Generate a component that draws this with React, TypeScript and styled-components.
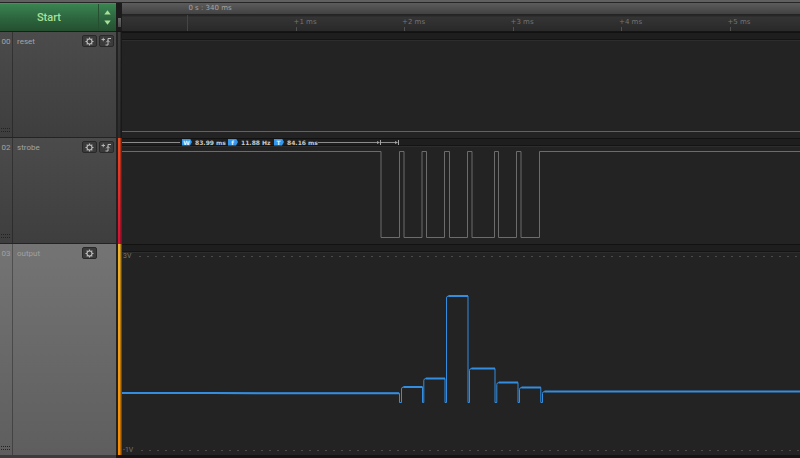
import React from "react";
import styled, { createGlobalStyle } from "styled-components";

const GlobalStyle = createGlobalStyle`
  *, *::before, *::after { box-sizing: border-box; }
  html, body { margin: 0; background: #232323; }
  body { font-family: Roboto, "Liberation Sans", sans-serif; }
  button { font: inherit; border: 0; margin: 0; padding: 0; cursor: pointer; }
  svg { display: block; }
`;

const Page = styled.main`
  display: grid;
  grid-template-rows: 3px 29px 106px 106px minmax(211px, 1fr) 3px;
  min-height: 100vh;
  overflow: hidden;
`;

const TopEdge = styled.div`
  background: #606060;
  border-bottom: 1px solid #262626;
`;

const BottomEdge = styled.div`
  display: grid;
  grid-template-columns: 116px 1fr;
  background: #151414;
  &::before {
    content: "";
    background: #3c3c3c;
  }
`;

const Row = styled.section`
  display: grid;
  grid-template-columns: 116px 6px minmax(0, 1fr);
  min-height: 0;
`;

const StartGroup = styled.div`
  display: grid;
  grid-template-columns: 1fr 17px;
  background: linear-gradient(#3a8450, #2c643e 55%, #25502f);
  border-top: 1px solid #4b8f5f;
  border-bottom: 1px solid #1c1c1c;
`;

const StartButton = styled.button`
  background: none;
  border-right: 1px solid #24502f;
  color: #a8e09a;
  font-size: 11px;
  line-height: 12px;
  font-weight: 500;
`;

const Stepper = styled.div`
  display: grid;
  grid-template-rows: 1fr 1fr;
  padding: 4px 0;
`;

const StepButton = styled.button`
  display: grid;
  place-items: center;
  background: none;
`;

const Gutter = styled.div`
  display: flex;
  align-items: flex-end;
  background: #1c1c1c;
  padding: 0 1px 4px 2px;
  border-bottom: 1px solid #151515;
`;

const ScrollThumb = styled.div`
  flex: 1;
  height: 9px;
  background: linear-gradient(#696969, #4c4c4c);
`;

const TimeRuler = styled.div`
  display: grid;
  grid-template-rows: 12px 1fr;
`;

const BaseTime = styled.div`
  padding-left: 9.8%;
  background: linear-gradient(#5c5c5c, #424242);
  border-bottom: 1px solid #242424;
  color: #a6a6a6;
  font: 7px/11px "DejaVu Sans", sans-serif;
  white-space: pre;
`;

const Ticks = styled.div`
  display: flex;
  min-width: 0;
  overflow: hidden;
  padding-left: 9.6%;
  background: linear-gradient(#242424, #343434 15%, #292929);
  border-bottom: 1px solid #151515;
`;

const Tick = styled.div<{ $major?: boolean }>`
  flex: 0 0 17.7%;
  display: flex;
  flex-direction: column;
  justify-content: space-between;
  color: #747474;
  font: 7px/10px "DejaVu Sans", sans-serif;
  border-left: 1px solid ${(p) => (p.$major ? "#454545" : "transparent")};
  padding-top: 2px;
  &::after {
    content: "";
    width: 1px;
    height: ${(p) => (p.$major ? 0 : 4)}px;
    margin-left: -1px;
    background: #505050;
  }
`;

const TickLabel = styled.span`
  margin-left: -3px;
  white-space: pre;
`;

const Channel = styled.div<{ $selected?: boolean }>`
  display: grid;
  grid-template-columns: 13px 1fr;
  background: ${(p) =>
    p.$selected
      ? "linear-gradient(#747474, #5e5e5e)"
      : "linear-gradient(#4b4b4b, #3e3e3e)"};
  color: ${(p) => (p.$selected ? "#a0a0a0" : "#a4a4a4")};
  border-bottom: ${(p) => (p.$selected ? 0 : 1)}px solid #242424;
  font-size: 8px;
  line-height: 12px;
`;

const ChannelIndex = styled.div`
  display: flex;
  flex-direction: column;
  justify-content: space-between;
  align-items: center;
  padding: 4px 0;
  border-right: 1px solid rgba(0, 0, 0, 0.3);
`;

const ChannelHeader = styled.div`
  display: grid;
  grid-template-columns: 1fr 15px 15px;
  column-gap: 2px;
  align-items: start;
  padding: 3px 2px 0 4px;
`;

const ChannelName = styled.span`
  padding-top: 1px;
`;

const IconButton = styled.button`
  height: 12px;
  display: grid;
  place-items: center;
  color: #bdbdbd;
  background: #3b3b3b;
  border: 1px solid #292929;
  border-radius: 2px;
`;

const ColorBar = styled.div<{ $from: string; $to: string; $edge: string }>`
  border-left: 2px solid #222222;
  border-right: 1px solid ${(p) => p.$edge};
  background: linear-gradient(${(p) => p.$from}, ${(p) => p.$to});
  box-shadow: inset -1px 0 0 rgba(0, 0, 0, 0.25);
`;

const Track = styled.div`
  display: flex;
  flex-direction: column;
  min-width: 0;
  background: #232323;
  & > svg {
    flex: 1;
    min-height: 0;
    width: 100%;
  }
`;

const Band = styled.div`
  height: 8px;
  flex: none;
  display: flex;
  align-items: center;
  background: #1e1e1e;
  border-top: 1px solid #121212;
  border-bottom: 1px solid #141414;
  box-shadow: 0 1px 0 #2d2d2d;
`;

const Span = styled.i<{ $size: string }>`
  flex: 0 0 ${(p) => p.$size};
  height: 1px;
  background: #8c8c8c;
`;

const Badge = styled.b`
  flex: none;
  width: 10px;
  height: 7px;
  margin-left: 2px;
  padding-right: 1px;
  display: flex;
  justify-content: center;
  background: #3296ea;
  clip-path: polygon(0 0, 80% 0, 100% 50%, 80% 100%, 0 100%);
  color: #e4f2ff;
  font: bold 6px/7px "DejaVu Sans", sans-serif;
`;

const Reading = styled.span`
  flex: none;
  width: 34px;
  padding-left: 3px;
  padding-top: 1px;
  color: #c8c8c8;
  font: bold 6px/8px "DejaVu Sans", sans-serif;
  white-space: pre;
`;

const AxisLine = styled.div`
  height: 9px;
  flex: none;
  display: flex;
  align-items: center;
  gap: 2px;
  padding-left: 1px;
  color: #747474;
  font-size: 7px;
  line-height: 9px;
  &::after {
    content: "";
    flex: 1;
    height: 1px;
    background: repeating-linear-gradient(
      90deg,
      transparent 0 6px,
      #4a4a4a 6px 8px
    );
  }
`;

function Arrow({ down }: { down?: boolean }) {
  return (
    <svg width="7" height="5" viewBox="0 0 7 5">
      <path d={down ? "M.3.5h6.4L3.5 4.7z" : "M.3 4.5h6.4L3.5.3z"} fill="#a8e09a" />
    </svg>
  );
}

function Gear() {
  return (
    <svg width="9" height="9" viewBox="0 0 18 18" fill="none" stroke="currentColor">
      <circle cx="9" cy="9" r="5" strokeWidth="2.2" />
      <path
        d="M9 1v3M9 14v3M1 9h3M14 9h3M3.4 3.4l2 2M12.6 12.6l2 2M3.4 14.6l2-2M12.6 5.4l2-2"
        strokeWidth="2.4"
      />
    </svg>
  );
}

function EdgeTrigger() {
  return (
    <svg width="11" height="9" viewBox="0 0 22 18" fill="none" stroke="currentColor">
      <path d="M1 5h7M4.500 1.500v7" strokeWidth="1.800" />
      <path d="M9 16h5V3h6M10.500 10.500L14 7l3.500 3.500" strokeWidth="2" />
    </svg>
  );
}

function Grip() {
  return (
    <svg width="10" height="5" viewBox="0 0 10 5" stroke="#222222" aria-hidden="true">
      <path d="M0 .5h10M0 3.500h10" strokeDasharray="1 1" />
    </svg>
  );
}

function SpanEnd() {
  return (
    <svg width="4" height="5" viewBox="0 0 4 5" fill="#a5a5a5">
      <path d="M0 1l3 1.500L0 4zM3 0h1v5H3z" />
    </svg>
  );
}

type ChannelProps = { index: string; name: string; edge?: boolean; selected?: boolean };

function ChannelPanel({ index, name, edge, selected }: ChannelProps) {
  return (
    <Channel $selected={selected}>
      <ChannelIndex>
        {index}
        <Grip />
      </ChannelIndex>
      <ChannelHeader>
        <ChannelName>{name}</ChannelName>
        <IconButton aria-label={`${name} settings`}>
          <Gear />
        </IconButton>
        {edge && (
          <IconButton aria-label={`${name} edge trigger`}>
            <EdgeTrigger />
          </IconButton>
        )}
      </ChannelHeader>
    </Channel>
  );
}

type WaveProps = { height: number; d: string; color: string; weight?: number };

function Wave({ height, d, color, weight = 1 }: WaveProps) {
  return (
    <svg viewBox={`0 0 678 ${height}`} preserveAspectRatio="none" fill="none">
      <path d={d} stroke={color} strokeWidth={weight} vectorEffect="non-scaling-stroke" />
    </svg>
  );
}

const STROBE_EDGES = [
  259, 277.5, 282, 300, 304.5, 322.5, 327.5, 345.5, 350, 372.5, 376.5, 394.5, 399, 417.5,
];

const strobePath =
  "M0 5.5" + STROBE_EDGES.map((x, i) => `H${x}V${i % 2 ? 5.5 : 91.5}`).join("") + "H678";

const OUTPUT_STEPS = [
  { dip: 277.5, rise: 279.5, level: 126 },
  { dip: 300.5, rise: 301.8, level: 117.5 },
  { dip: 323, rise: 324.5, level: 35 },
  { dip: 346, rise: 347.5, level: 107.5 },
  { dip: 373, rise: 374.8, level: 121.5 },
  { dip: 396, rise: 397.5, level: 126.5 },
  { dip: 418.8, rise: 420.5, level: 130.5 },
];

const outputPath =
  "M0 132H90L150 132.3H277.5" +
  OUTPUT_STEPS.map(
    (s) => `H${s.dip}V141.5H${s.rise}V${s.level + 2}l.5-1.500 2-.5`
  ).join("") +
  "H678";

const outputPlateaus =
  "M0 132H90L150 132.3H277" +
  OUTPUT_STEPS.map(
    (s, i) => `M${s.rise + 2} ${s.level}H${OUTPUT_STEPS[i + 1]?.dip ?? 678}`
  ).join("");

export default function App() {
  return (
    <>
      <GlobalStyle />
      <Page>
        <TopEdge />
        <Row>
          <StartGroup>
            <StartButton>Start</StartButton>
            <Stepper>
              <StepButton aria-label="Increase">
                <Arrow />
              </StepButton>
              <StepButton aria-label="Decrease">
                <Arrow down />
              </StepButton>
            </Stepper>
          </StartGroup>
          <Gutter>
            <ScrollThumb />
          </Gutter>
          <TimeRuler>
            <BaseTime>0 s : 340 ms</BaseTime>
            <Ticks>
              <Tick $major />
              {[1, 2, 3, 4, 5].map((n) => (
                <Tick key={n}>
                  <TickLabel>{`+${n} ms`}</TickLabel>
                </Tick>
              ))}
            </Ticks>
          </TimeRuler>
        </Row>
        <Row>
          <ChannelPanel index="00" name="reset" edge />
          <ColorBar $from="#3c3c3c" $to="#2c2c2c" $edge="#191919" />
          <Track>
            <Band />
            <Wave height={98} d="M0 91.500H678" color="#626262" />
          </Track>
        </Row>
        <Row>
          <ChannelPanel index="02" name="strobe" edge />
          <ColorBar $from="#ee4a1e" $to="#cf1238" $edge="#6c1c1c" />
          <Track>
            <Band>
              <Span $size="58px" />
              <Badge>W</Badge>
              <Reading>83.99 ms</Reading>
              <Badge>f</Badge>
              <Reading>11.88 Hz</Reading>
              <Badge>T</Badge>
              <Reading>84.16 ms</Reading>
              <Span $size="59px" />
              <SpanEnd />
              <Span $size="14px" />
              <SpanEnd />
            </Band>
            <Wave height={98} d={strobePath} color="#6c6c6c" />
          </Track>
        </Row>
        <Row>
          <ChannelPanel index="03" name="output" selected />
          <ColorBar $from="#eeb22c" $to="#f78a00" $edge="#744a10" />
          <Track>
            <Band />
            <AxisLine>3V</AxisLine>
            <svg viewBox="0 0 678 185" preserveAspectRatio="none" fill="none" stroke="#338ee2">
              <path d={outputPath} vectorEffect="non-scaling-stroke" />
              <path d={outputPlateaus} strokeWidth="2" vectorEffect="non-scaling-stroke" />
            </svg>
            <AxisLine>-1V</AxisLine>
          </Track>
        </Row>
        <BottomEdge />
      </Page>
    </>
  );
}
